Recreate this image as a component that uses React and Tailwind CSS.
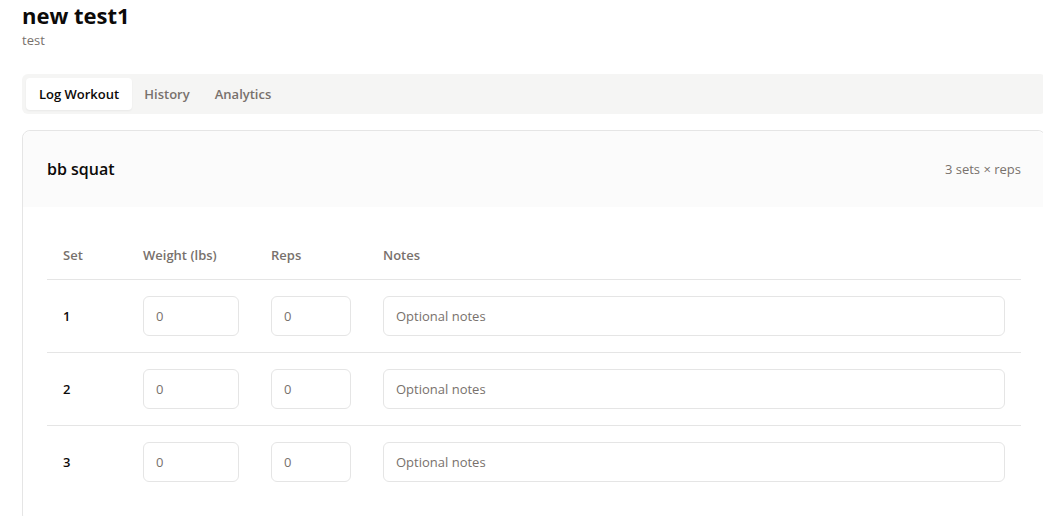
import { useState } from "react";

const TABS = [
  { name: "Log Workout", width: "w-[106px]" },
  { name: "History", width: "w-[70px]" },
  { name: "Analytics", width: "w-[82px]" },
];
const SETS = [1, 2, 3];

const FIELD =
  "block h-10 rounded-md border border-[#e5e5e5] bg-white px-3 text-[13px] text-[#0c0a09] outline-none placeholder:text-[#78716c] focus:border-[#a8a29e]";
const HEAD = "h-12 px-4 text-left align-middle font-semibold";

function Tabs({ active, onSelect }) {
  return (
    <div role="tablist" className="flex h-10 items-center rounded-md bg-[#f5f5f4] p-1">
      {TABS.map(({ name, width }) => (
        <button
          key={name}
          type="button"
          role="tab"
          aria-selected={active === name}
          onClick={() => onSelect(name)}
          className={`${width} h-8 rounded text-center text-[13px] font-semibold whitespace-nowrap ${
            active === name ? "bg-white text-[#0c0a09] shadow-xs" : "text-[#78716c]"
          }`}
        >
          {name}
        </button>
      ))}
    </div>
  );
}

function SetRow({ number }) {
  return (
    <tr className="border-b border-[#e5e5e5] last:border-b-0">
      <td className="p-4 font-semibold">{number}</td>
      <td className="p-4">
        <input type="number" placeholder="0" aria-label={`Set ${number} weight`} className={`${FIELD} w-24`} />
      </td>
      <td className="p-4">
        <input type="number" placeholder="0" aria-label={`Set ${number} reps`} className={`${FIELD} w-20`} />
      </td>
      <td className="p-4">
        <input type="text" placeholder="Optional notes" aria-label={`Set ${number} notes`} className={`${FIELD} w-full`} />
      </td>
    </tr>
  );
}

export default function App() {
  const [active, setActive] = useState("Log Workout");
  return (
    <div className="h-screen overflow-hidden bg-white font-['Segoe_UI','Open_Sans',sans-serif] text-[13px] leading-5 text-[#0c0a09]">
      <main className="-mr-[3px] pl-[22px]">
        <header className="pb-6">
          <h1 className="text-[22px] leading-[30px] font-bold">new test1</h1>
          <p className="text-[#78716c]">test</p>
        </header>
        <Tabs active={active} onSelect={setActive} />
        <section className="mt-4 rounded-lg border border-[#e5e5e5]">
          <div className="flex items-center justify-between rounded-t-lg bg-[#fbfbfb] p-6">
            <h2 className="text-base leading-7 font-semibold">bb squat</h2>
            <p className="text-[#78716c]">3 sets × reps</p>
          </div>
          <div className="p-6">
            <table className="w-full table-fixed border-collapse">
              <thead>
                <tr className="border-b border-[#e5e5e5] text-[#78716c]">
                  <th className={`${HEAD} w-20`}>Set</th>
                  <th className={`${HEAD} w-32`}>Weight (lbs)</th>
                  <th className={`${HEAD} w-28`}>Reps</th>
                  <th className={HEAD}>Notes</th>
                </tr>
              </thead>
              <tbody>
                {SETS.map((n) => (
                  <SetRow key={n} number={n} />
                ))}
              </tbody>
            </table>
          </div>
        </section>
      </main>
    </div>
  );
}
